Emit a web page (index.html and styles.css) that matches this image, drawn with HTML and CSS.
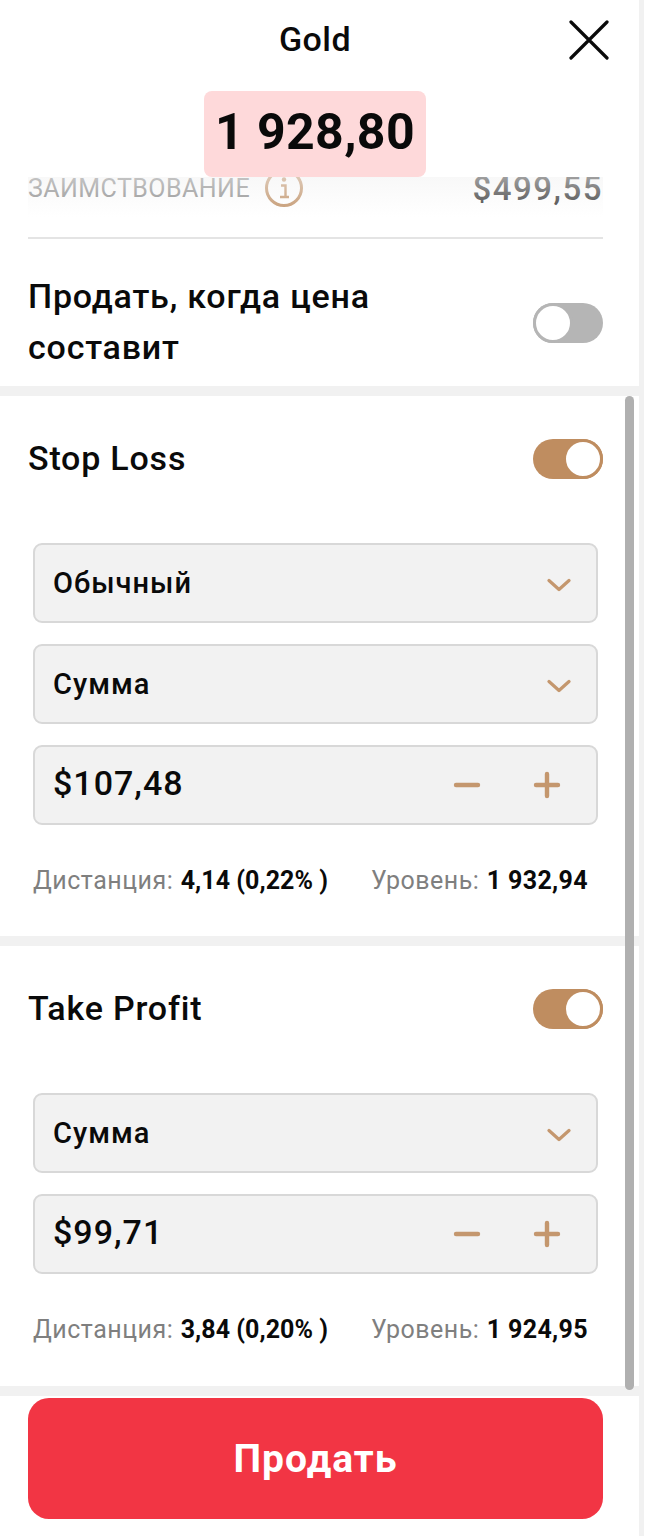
FILE: index.html
```html
<!DOCTYPE html>
<html lang="ru">
<head>
<meta charset="utf-8">
<title>Gold</title>
<link rel="stylesheet" href="styles.css">
</head>
<body>
<div class="panel">
  <header class="head">
    <div class="title">Gold</div>
    <button class="close" aria-label="Закрыть">
      <svg width="40" height="40" viewBox="0 0 40 40"><path d="M2 2 L38 38 M38 2 L2 38" fill="none" stroke="#0a0a0a" stroke-width="3.2" stroke-linecap="round"/></svg>
    </button>
    <div class="price">1 928,80</div>
  </header>

  <div class="clip-row">
    <div class="clip-inner">
      <span class="borrow">ЗАИМСТВОВАНИЕ
        <svg class="info" width="40" height="40" viewBox="0 0 40 40"><circle cx="20" cy="20" r="17.5" fill="none" stroke="#c4976e" stroke-width="3"/><path d="M17 17.5h4.5v11M16 29h9" fill="none" stroke="#c4976e" stroke-width="2.4"/><circle cx="20" cy="11.5" r="2.2" fill="#c4976e"/></svg>
      </span>
      <span class="borrow-val">$499,55</span>
    </div>
    <div class="fade"></div>
  </div>

  <div class="sell-when">
    <div class="sell-text">Продать, когда цена составит</div>
    <span class="toggle"><span class="knob"></span></span>
  </div>

  <section class="sec sec-sl">
    <div class="sec-head">
      <div class="sec-title">Stop Loss</div>
      <span class="toggle on"><span class="knob"></span></span>
    </div>
    <div class="field"><span>Обычный</span><svg class="chev" width="24" height="14" viewBox="0 0 24 14"><path d="M2 2.5 L12 11.5 L22 2.5" fill="none" stroke="#c4976e" stroke-width="3.2" stroke-linecap="round" stroke-linejoin="round"/></svg></div>
    <div class="field"><span>Сумма</span><svg class="chev" width="24" height="14" viewBox="0 0 24 14"><path d="M2 2.5 L12 11.5 L22 2.5" fill="none" stroke="#c4976e" stroke-width="3.2" stroke-linecap="round" stroke-linejoin="round"/></svg></div>
    <div class="field amount"><span class="val">$107,48</span>
      <span class="steppers">
        <svg width="28" height="28" viewBox="0 0 28 28"><path d="M3 14H25" stroke="#c4976e" stroke-width="4.4" stroke-linecap="round"/></svg>
        <svg width="28" height="28" viewBox="0 0 28 28"><path d="M3 14H25M14 3V25" stroke="#c4976e" stroke-width="4.4" stroke-linecap="round"/></svg>
      </span>
    </div>
    <div class="stats">
      <span><span class="lbl">Дистанция:</span> <b class="dist">4,14 (0,22% )</b></span>
      <span><span class="lbl">Уровень:</span> <b>1 932,94</b></span>
    </div>
  </section>

  <section class="sec sec-tp">
    <div class="sec-head">
      <div class="sec-title">Take Profit</div>
      <span class="toggle on"><span class="knob"></span></span>
    </div>
    <div class="field"><span>Сумма</span><svg class="chev" width="24" height="14" viewBox="0 0 24 14"><path d="M2 2.5 L12 11.5 L22 2.5" fill="none" stroke="#c4976e" stroke-width="3.2" stroke-linecap="round" stroke-linejoin="round"/></svg></div>
    <div class="field amount"><span class="val">$99,71</span>
      <span class="steppers">
        <svg width="28" height="28" viewBox="0 0 28 28"><path d="M3 14H25" stroke="#c4976e" stroke-width="4.4" stroke-linecap="round"/></svg>
        <svg width="28" height="28" viewBox="0 0 28 28"><path d="M3 14H25M14 3V25" stroke="#c4976e" stroke-width="4.4" stroke-linecap="round"/></svg>
      </span>
    </div>
    <div class="stats">
      <span><span class="lbl">Дистанция:</span> <b class="dist">3,84 (0,20% )</b></span>
      <span><span class="lbl">Уровень:</span> <b>1 924,95</b></span>
    </div>
  </section>

  <div class="foot"><button class="sell-btn">Продать</button></div>
  <div class="scrollbar"></div>
</div>
</body>
</html>
```
FILE: styles.css
```css
* { box-sizing: border-box; }
html, body { margin: 0; padding: 0; background: #fff; }
body { width: 661px; height: 1536px; overflow: hidden; font-family: Roboto, "Noto Sans", sans-serif; color: #0a0a0a; }
.panel { position: relative; width: 644px; height: 1536px; border-right: 5px solid #f1f1f1; background: #fff; }
.head { position: relative; height: 177px; display: flex; flex-direction: column; align-items: center; }
.title { margin-top: 19px; height: 40px; line-height: 40px; font-size: 34px; font-weight: 500; letter-spacing: 0.4px; padding-right: 9px; }
.close { position: absolute; right: 30px; top: 20px; width: 40px; height: 40px; padding: 0; border: 0; background: none; }
.close svg { display: block; }
.price { margin-top: 32px; margin-right: 9px; width: 222px; height: 86px; line-height: 82px; text-align: center; background: #fed9da; border-radius: 8px; font-size: 50px; font-weight: 700; letter-spacing: 0.4px; position: relative; z-index: 2; }
.clip-row { position: relative; height: 62px; margin: 0 36px 0 28px; border-bottom: 2px solid #e4e4e4; overflow: hidden; }
.clip-inner { display: flex; justify-content: space-between; align-items: center; height: 26px; margin-top: -2px; }
.borrow { display: flex; align-items: center; gap: 14px; font-size: 25px; letter-spacing: 0.45px; color: #8f8f8f; }
.info { flex: none; }
.borrow-val { font-size: 33px; font-weight: 500; letter-spacing: 1.5px; color: #3f3f3f; }
.fade { position: absolute; left: -28px; right: -36px; top: 0; height: 40px; background: linear-gradient(#f2f2f288, #ffffff00); }
.sell-when { height: 157px; padding: 32px 36px 0 28px; display: flex; justify-content: space-between; align-items: flex-start; border-bottom: 10px solid #f1f1f1; }
.sell-text { width: 400px; font-size: 34px; font-weight: 500; letter-spacing: 0.8px; line-height: 51px; }
.toggle { flex: none; display: block; width: 70px; height: 40px; margin-top: 32px; border-radius: 20px; background: #b5b5b5; position: relative; }
.knob { position: absolute; left: 0; top: 0; width: 40px; height: 40px; border-radius: 50%; background: #fff; border: 3px solid #b5b5b5; }
.toggle.on { background: #bf8d60; }
.toggle.on .knob { left: 30px; border-color: #bf8d60; }
.sec { padding: 0 36px 0 28px; border-bottom: 10px solid #f1f1f1; }
.sec-sl { height: 550px; }
.sec-tp { height: 450px; }
.sec-head { height: 147px; padding-top: 43px; display: flex; justify-content: space-between; align-items: flex-start; }
.sec-head .toggle { margin-top: 0; }
.sec-title { margin-top: -1px; font-size: 34px; font-weight: 500; letter-spacing: 0.8px; line-height: 40px; }
.field { height: 80px; margin: 0 5px 21px 5px; padding: 0 25px 0 18px; display: flex; align-items: center; justify-content: space-between; background: #f2f2f2; border: 2px solid #d8d8d8; border-radius: 9px; font-size: 29px; font-weight: 500; letter-spacing: 1px; }
.field.amount { font-size: 34px; letter-spacing: 1px; padding-right: 35px; }
.val { margin-bottom: 4px; }
.chev { flex: none; margin-top: 3px; }
.steppers { display: flex; gap: 52px; }
.steppers svg { display: block; }
.stats { display: flex; justify-content: space-between; margin: 0 15px 0 5px; padding-top: 17px; font-size: 25px; letter-spacing: 0.25px; line-height: 36px; }
.lbl { color: #7f7f7f; letter-spacing: 0.5px; margin-right: 1px; }
.stats b { font-weight: 700; letter-spacing: 0.35px; }
.stats b.dist { letter-spacing: 0.05px; }
.foot { padding: 2px 36px 0 28px; }
.sell-btn { display: block; width: 575px; height: 121px; padding: 0; border: 0; border-radius: 21px; background: #f23544; color: #fff; font-family: Roboto, sans-serif; font-size: 39px; font-weight: 700; letter-spacing: 1px; }
.scrollbar { position: absolute; left: 625px; top: 396px; width: 9px; height: 994px; border-radius: 5px; background: #b0b0b0; }
```
